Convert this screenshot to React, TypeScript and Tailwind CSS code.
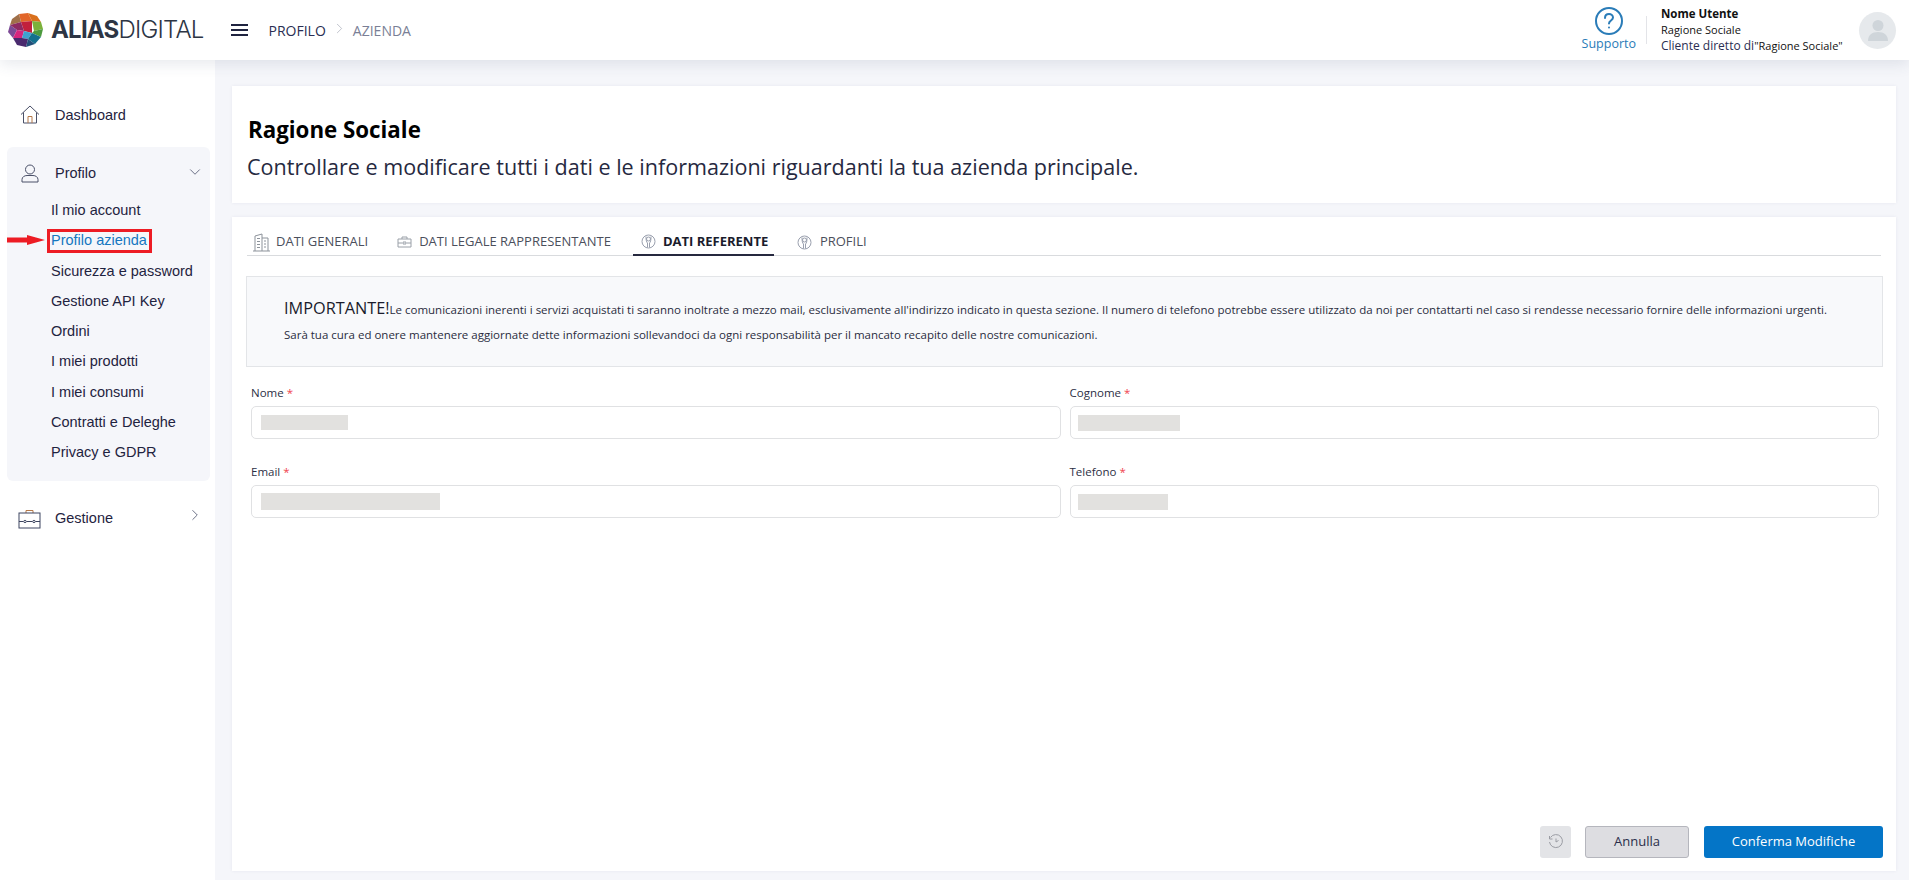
import { ChevronDown, ChevronRight } from "lucide-react";

const openSans = "font-['Open_Sans',sans-serif]";
const subItems = ["Il mio account", "Profilo azienda", "Sicurezza e password", "Gestione API Key", "Ordini", "I miei prodotti", "I miei consumi", "Contratti e Deleghe", "Privacy e GDPR"];

function Logo() {
  return (
    <svg width="36" height="34" viewBox="0 0 36 34" className="shrink-0">
      <polygon points="11,1 20,0 24,8 13,9" fill="#e2662a" />
      <polygon points="20,0 29,3 33,9 24,8" fill="#d9701c" />
      <polygon points="11,1 4,6 2,12 13,9" fill="#a0704a" />
      <polygon points="2,12 0,19 5,25 9,17" fill="#7c4a96" />
      <polygon points="13,9 24,8 24,20 16,18" fill="#c2203c" />
      <polygon points="2,12 13,9 16,18 9,17" fill="#8e2a62" />
      <polygon points="9,17 16,18 14,25 5,25" fill="#d6267e" />
      <polygon points="24,8 33,9 35,16 26,18" fill="#7cb13a" />
      <polygon points="26,18 35,16 33,24 24,20" fill="#4c9a3e" />
      <polygon points="16,18 24,20 20,26 14,25" fill="#3fa3d0" />
      <polygon points="24,20 33,24 27,31 20,26" fill="#14708f" />
      <polygon points="5,25 14,25 20,26 18,34 9,32" fill="#4a2a6e" />
      <polygon points="20,26 27,31 18,34" fill="#22507a" />
    </svg>
  );
}

function PersonTabIcon() {
  return (
    <svg width="15" height="17" viewBox="0 0 15 17" fill="none" stroke="#9aa0ae" strokeWidth="1" className="shrink-0">
      <circle cx="7.5" cy="8.5" r="6.5" />
      <path d="M5 3.500c0 4 .5 5.500 1.500 6.500v4.500M10 3.500c0 4-.5 5.500-1.500 6.500v4.500" />
      <circle cx="7.500" cy="6" r="2" />
    </svg>
  );
}

function Field({ label, redact }: { label: string; redact: string }) {
  return (
    <div>
      <label className={`block h-[20px] text-[11.5px] leading-[18px] text-[#2c2f45] ${openSans}`}>
        {label} <span className="text-[#f0434f]">*</span>
      </label>
      <div className="mt-[2px] flex h-[33px] items-center rounded-[5px] border border-[#e0e1e3] bg-white pl-[9px]">
        <div className={`bg-[#e2e1df] ${redact}`} />
      </div>
    </div>
  );
}

export default function App() {
  return (
    <div className="flex h-[880px] w-[1909px] flex-col overflow-hidden bg-[#f5f6fa] font-['Liberation_Sans',sans-serif] text-[#1f2340]">
      <header className="relative z-10 flex h-[60px] shrink-0 items-center bg-white pl-[8px] pr-[13px] shadow-[0_4px_14px_rgba(60,70,110,0.12)]">
        <Logo />
        <div className="ml-[7px] flex font-['Inter',sans-serif] text-[24px] tracking-[-0.8px] text-[#2d3544]">
          <span className="font-bold">ALIAS</span>
          <span className="font-light">DIGITAL</span>
        </div>
        <div className="ml-[27px] flex w-[17px] flex-col gap-[3px]">
          <span className="h-[2px] bg-[#1f2340]" />
          <span className="h-[2px] bg-[#1f2340]" />
          <span className="h-[2px] bg-[#1f2340]" />
        </div>
        <div className={`ml-[21px] flex items-center text-[14px] ${openSans}`}>
          <span className="text-[#2a2e52]">PROFILO</span>
          <ChevronRight className="mx-[5px] size-[17px] -translate-y-[2px] text-[#a9adba]" strokeWidth={1} />
          <span className="text-[#7a7f96]">AZIENDA</span>
        </div>
        <div className={`ml-auto flex items-center ${openSans}`}>
          <div className="flex flex-col items-center pb-[2px]">
            <svg width="30" height="30" viewBox="0 0 30 30" fill="none" stroke="#2a7cb8" strokeWidth="2">
              <circle cx="15" cy="15" r="13" />
              <path d="M11 12c0-2.500 1.800-4 4-4s4 1.500 4 3.500c0 3-4 3-4 6" strokeLinecap="round" />
              <circle cx="15" cy="21.500" r="1" fill="#2a7cb8" stroke="none" />
            </svg>
            <span className="text-[12.5px] leading-[16px] text-[#2a7cb8]">Supporto</span>
          </div>
          <div className="ml-[10px] h-[28px] w-px bg-[#e3e4e8]" />
          <div className="ml-[14px] w-[198px] text-[#111]">
            <div className="text-[11.5px] leading-[16px] font-bold">Nome Utente</div>
            <div className="text-[11px] leading-[16px]">Ragione Sociale</div>
            <div className="text-[12px] leading-[16px] text-[#2a2e52]">
              Cliente diretto di<span className="text-[11px] text-[#111]">"Ragione Sociale"</span>
            </div>
          </div>
          <div className="flex size-[37px] items-center justify-center overflow-hidden rounded-full bg-[#e6e9ec]">
            <svg width="22" height="24" viewBox="0 0 22 24" fill="#cfd5da">
              <circle cx="11" cy="7.500" r="5.500" />
              <path d="M1 23c0-6 4-9 10-9s10 3 10 9z" />
            </svg>
          </div>
        </div>
      </header>

      <div className="flex min-h-0 flex-1">
        <aside className="relative w-[215px] shrink-0 bg-white pl-[7px] pr-[5px] pt-[38px] text-[14.5px]">
          <div className="flex h-[36px] items-center pl-[13px]">
            <svg width="20" height="19" viewBox="0 0 20 19" fill="none" stroke="#4a5068" strokeWidth="1" className="shrink-0 -translate-y-[2px]">
              <path d="M1 9.500 10 1l9 8.500M3.500 7.500V18h13V7.500" />
              <path d="M8 18v-6.500h4V18" stroke="#b5794a" />
            </svg>
            <span className="ml-[15px]">Dashboard</span>
          </div>
          <div className="mt-[13px] h-[334px] rounded-[6px] bg-[#f5f6fa]">
            <div className="flex h-[48px] items-center pt-[4px] pl-[14px] pr-[6px]">
              <svg width="18" height="19" viewBox="0 0 18 19" fill="none" stroke="#4a5068" strokeWidth="1" className="shrink-0">
                <circle cx="9" cy="5.500" r="4.500" />
                <path d="M1 18v-2.500C1 13 3.500 11.500 6 11.500h6c2.500 0 5 1.500 5 4V18z" />
              </svg>
              <span className="ml-[16px] translate-y-px">Profilo</span>
              <ChevronDown className="ml-auto size-[18px] -translate-y-[1px] text-[#3f4560]" strokeWidth={1} />
            </div>
            <ul className="pl-[44px]">
              {subItems.map((item) => (
                <li key={item} className={`h-[30.250px] leading-[30px] ${item === "Profilo azienda" ? "text-[#1676c0]" : ""}`}>
                  {item}
                </li>
              ))}
            </ul>
          </div>
          <div className="mt-[20px] flex h-[36px] items-center pl-[11px] pr-[6px]">
            <svg width="23" height="20" viewBox="0 0 23 20" fill="none" stroke="#3d4560" strokeWidth="1" className="shrink-0">
              <path d="M8 4V1.500h7V4" stroke="#b5794a" />
              <rect x="1" y="4" width="21" height="15" />
              <path d="M1 12.500h4.500m3 0h6m3 0H22" />
              <circle cx="7" cy="12.500" r="1.200" />
              <circle cx="16" cy="12.500" r="1.200" />
            </svg>
            <span className="ml-[14px]">Gestione</span>
            <ChevronRight className="ml-auto size-[18px] -translate-y-[4px] text-[#3f4560]" strokeWidth={1} />
          </div>
          {/* annotation drawn over the menu */}
          <div className="absolute top-[169px] left-[47px] h-[24px] w-[105px] border-[3px] border-[#ed1c24]" />
          <svg width="38" height="10" viewBox="0 0 38 10" className="absolute top-[175px] left-[7px]">
            <path d="M0 2.500h20V0l18 5-18 5V7.500H0z" fill="#ed1c24" />
          </svg>
        </aside>

        <main className={`min-w-0 flex-1 pt-[26px] pl-[17px] pr-[13px] pb-[9px] ${openSans}`}>
          <section className="h-[117px] bg-white px-[15px] pt-[29px] shadow-[0_0_3px_rgba(60,70,110,0.08)]">
            <h1 className="pl-px text-[22.3px] leading-[30px] font-bold text-black">Ragione Sociale</h1>
            <p className="mt-[7px] text-[21.55px] leading-[30px] text-[#26293f]">Controllare e modificare tutti i dati e le informazioni riguardanti la tua azienda principale.</p>
          </section>

          <section className="mt-[14px] flex h-[654px] flex-col bg-white pl-[14px] pr-[13px] pb-[13px] shadow-[0_0_3px_rgba(60,70,110,0.08)]">
            <nav className="ml-px mr-[2px] flex h-[39px] items-end border-b border-[#d9dbde] text-[13px] text-[#4b4f5c]">
              <div className="flex h-[26px] items-center pl-[6px]">
                <svg width="17" height="19" viewBox="0 0 17 19" fill="none" stroke="#8d939b" strokeWidth="1" className="shrink-0">
                  <path d="M2 18V3l7-2v17M9 5h6v13M0 18h17M4 5.500h3M4 8.500h3M4 11.500h3M4 14.500h3M11 8h2M11 11h2M11 14h2" />
                </svg>
                <span className="ml-[6px]">DATI GENERALI</span>
              </div>
              <div className="ml-[29px] flex h-[26px] items-center">
                <svg width="15" height="13" viewBox="0 0 15 13" fill="none" stroke="#9aa0a8" strokeWidth="1" className="shrink-0">
                  <path d="M5 3V1h5v2M1 3h13v8H1zM1 7h4m5 0h4M6 6h3v2H6z" />
                </svg>
                <span className="ml-[7px]">DATI LEGALE RAPPRESENTANTE</span>
              </div>
              <div className="-mb-px ml-[22px] flex h-[27px] w-[141px] items-center border-b-[2px] border-[#26293f] pl-[8px] font-bold text-[#1a1c2c]">
                <PersonTabIcon />
                <span className="ml-[7px]">DATI REFERENTE</span>
              </div>
              <div className="ml-[23px] flex h-[26px] items-center">
                <PersonTabIcon />
                <span className="ml-[8px]">PROFILI</span>
              </div>
            </nav>

            <div className="mt-[20px] h-[91px] border border-[#e3e5e8] bg-[#f8f9fb] pt-[19px] pl-[37px] text-[11.5px] text-[#2a2d3e]">
              <p className="leading-[24px]">
                <span className="text-[16.3px] text-[#1a1c2c]">IMPORTANTE!</span>
                Le comunicazioni inerenti i servizi acquistati ti saranno inoltrate a mezzo mail, esclusivamente all'indirizzo indicato in questa sezione. Il numero di telefono potrebbe essere utilizzato da noi per contattarti nel caso si rendesse necessario fornire delle informazioni urgenti.
              </p>
              <p className="mt-[5px] leading-[16px]">Sarà tua cura ed onere mantenere aggiornate dette informazioni sollevandoci da ogni responsabilità per il mancato recapito delle nostre comunicazioni.</p>
            </div>

            <div className="mt-[17px] grid grid-cols-2 gap-x-[9px] gap-y-[24px] pl-[5px] pr-[4px]">
              <Field label="Nome" redact="h-[15px] w-[87px]" />
              <Field label="Cognome" redact="-ml-[2px] h-[16px] w-[102px]" />
              <Field label="Email" redact="h-[17px] w-[179px]" />
              <Field label="Telefono" redact="-ml-[2px] h-[16px] w-[90px]" />
            </div>

            <div className="mt-auto flex justify-end">
              <button className="flex h-[32px] w-[31px] items-center justify-center rounded-[3px] bg-[#e3e4e7]">
                <svg width="16" height="16" viewBox="0 0 16 16" fill="none" stroke="#9a9ca3" strokeWidth="1">
                  <path d="M2.500 3.500A6.500 6.500 0 1 1 1.500 8M1.500 2v3h3M8 4.500V8l2.500-1.500" />
                </svg>
              </button>
              <button className="ml-[14px] h-[32px] w-[104px] rounded-[3px] border border-[#b5b6bd] bg-[#dddde1] text-[13px] text-[#2a2d4a]">Annulla</button>
              <button className="ml-[15px] h-[32px] w-[179px] rounded-[3px] bg-[#0475c7] text-[13px] text-white">Conferma Modifiche</button>
            </div>
          </section>
        </main>
      </div>
    </div>
  );
}
